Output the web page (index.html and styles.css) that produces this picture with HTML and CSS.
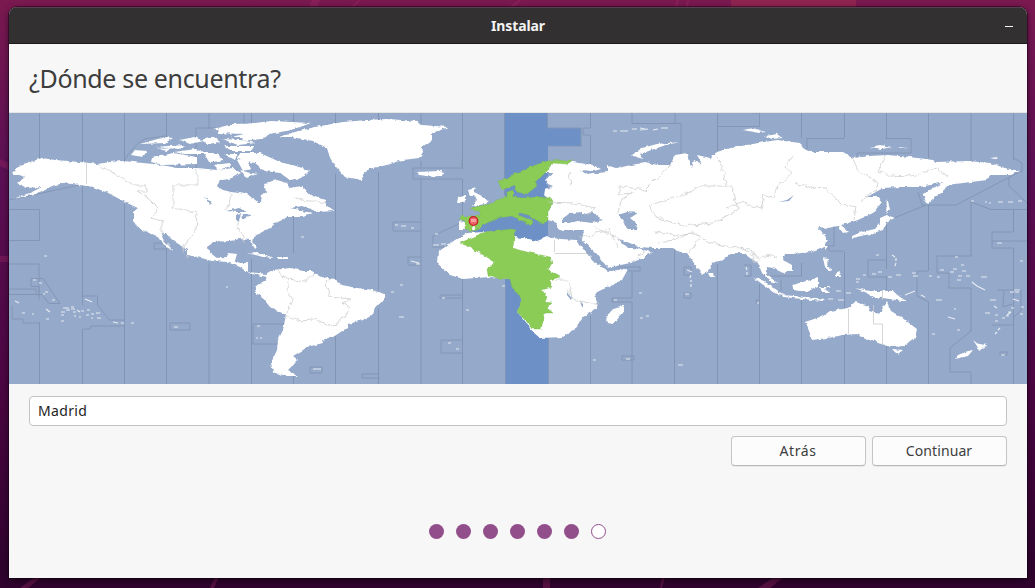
FILE: index.html
```html
<!DOCTYPE html>
<html lang="es">
<head>
<meta charset="utf-8">
<title>Instalar</title>
<link rel="stylesheet" href="styles.css">
</head>
<body>
<svg class="wallpaper" viewBox="0 0 1035 588" aria-hidden="true">
  <path class="streak" d="M312 0h8l-3 8h-9zM358 0h3l-8 8h-3zM518 0h3l-8 8h-5zM676 0h2v8h-3zM687 0h2l-1 8h-3zM0 159l9 4v7l-9-4zM0 256h9v6H0zM543 577h7v11h-7zM662 577h3l-3 11h-2zM774 577h10l-14 11h-12zM35 577h7l-14 11h-8zM215 577h4l-5 11h-4z"/>
  <path class="streak warm" d="M731 0h125v8H731z"/>
</svg>
<main class="window">
  <header class="titlebar"><span class="caption">Instalar</span><button class="minimize" aria-label="Minimizar"></button></header>
  <section class="heading"><h1>¿Dónde se encuentra?</h1></section>
  <svg class="map" viewBox="9 113 1018 271" role="img" aria-label="Mapa de zonas horarias">
    <defs><filter id="coast" x="-5%" y="-5%" width="110%" height="110%"><feTurbulence type="fractalNoise" baseFrequency=".22" numOctaves="2" seed="4" result="n"/><feDisplacementMap in="SourceGraphic" in2="n" scale="3.5" xChannelSelector="R" yChannelSelector="G"/></filter>
    <filter id="border" x="-5%" y="-5%" width="110%" height="110%"><feTurbulence type="fractalNoise" baseFrequency=".16" numOctaves="2" seed="8" result="n"/><feDisplacementMap in="SourceGraphic" in2="n" scale="6" xChannelSelector="R" yChannelSelector="G"/></filter></defs>
    <path class="sea" d="M9 113h1018v271H9z"/>
    <path class="zone" d="M505 113h43v15h33v18h-33v238h-43zM545 214v28H463l20-20 20-9z"/>
    <path class="meridian" d="M39.500 113v46M39.500 322v62M82.500 113v50M82.500 184v112M82.500 329v55M124.500 113v48M124.500 200v184M166.500 113v24M166.500 248v136M209 113v16M209 263v121M251.500 113v20M251.500 259v125M293.500 113v12M293.500 216v37M293.500 374v10M335.500 113v10M335.500 174v105M335.500 336v48M378.500 113v7M378.500 172v118M378.500 308v76M421 113v10M421 161v7M421 179v43M421 231v153M462.500 113v56M462.500 179v43M462.500 279v105M504.500 113v82M505.500 284v100M547.500 113v15M548.500 338v46M590.500 113v15M590.500 135v30M590.500 316v68M632 113v10M632 272v26M632 301v83M675 113v10M674.500 249v135M717.500 113v38M717.500 264v120M759.500 113v13M759.500 284v100M801.500 113v25M801.500 263v13M801.500 300v84M844.500 113v25M844.500 252v132M886.500 113v25M886.500 222v47M886.500 276v14M886.500 346v38M928.500 113v45M928.500 204v67M928.500 302v82M971 113v48M971 201v55M971 288v43M971 373v11M1013.500 113v47M1013.500 210v22M1013.500 248v136"/>
    <path class="edge" d="M9 200l75-16M9 209.500h30.500v31H9M9 264h30v32M9 289h27v5M9 294.500h33l7 9h11l-17-25H31v8h8v13M12 305v14h11v4h16M82.500 329h8v-3h34M82.500 305V296h15v9l12 15h15v6M124 161q8-14 20-22l22-3M196 168v-40h48v-15M154 243h12v6h-12zM170 323h20v7h-20zM284 324h-31v20h30M310 367h12v6h-12zM378 374h-16v4h18M421 257h-13v8h13M462 298h-22v-3h22M462 340h-21v13h21M393 222h28v9h-28zM462 179h-49v-11h49v-9M462 222l-29 14v11h12M548 128h33v18h-33M590 135h-7v-7h7M632 123.500h49v30l-12 10M717 126.500h42.500v-13M752 113h7M807 138.500h37M807 138v11l-10 4M886 138.500h25V153h-54v5M918 192l4 13h34l65-34M1022 173v-10l-8-5M1009 178v8l18 17M971 202l20 7.500h36M894 218l32-13M1013 232h-21v16h21M992 241h35M971 256h-34v17h12v15h22M928 271h-11v25l12 6M886 260h-18v17h18M834 222v24h-8l4 5h14M764 276h37M781 280v11M971 331l-21 17v24h21M992 325h22M1004 290l-1 17 9-3M997 290h24v20l-8 8M1000 352h7v3h-7zM618 267h22v4h-12M632 298h-20v4h20M622 356h12v4h-12zM684 267h7v8h-7zM684 293h7v5h-7zM744 265h7v11h-7M759 300h-3v4"/>
    <g class="land" filter="url(#coast)">
      <path d="M12 173L20 165 30 162 42 158 55 160 80 162 98 164 110 162 123 161 133 162 153 164 167 166 177 168 197 168 217 170 233 168 241 173 230 179 221 180 217 186 219 189 231 192 247 194 258 202 261 202 262 194 266 192 264 183 277 180 287 183 290 188 302 186 307 191 313 196 325 200 326 205 335 211 318 212 302 206 290 208 300 210 312 213 300 217 287 217 277 222 270 228 262 232 253 238 252 241 257 247 255 249 250 240 240 239 230 241 213 242 208 247 209 252 217 258 227 257 229 253 237 254 235 261 240 263 248 263 248 272 258 273 267 274 267 277 253 274 247 272 240 267 227 262 213 261 197 257 188 255 187 250 177 243 170 238 166 233 161 233 163 240 174 251 168 248 160 240 157 236 148 233 137 227 133 220 133 212 138 208 127 203 108 193 93 187 73 184 60 183 50 187 40 193 13 199 32 192 42 187 27 188 17 183 25 177Z"/>
      <path d="M267 273L273 270 290 268 303 271 312 271 322 277 335 279 342 285 357 288 373 290 385 294 385 300 375 307 373 315 363 320 348 324 347 328 333 337 322 340 323 343 307 347 303 350 293 356 298 360 292 366 288 370 298 376 283 376 273 372 271 363 277 350 278 340 283 330 286 315 270 307 262 297 255 292 257 285 266 280Z"/>
      <path d="M279 137l16-5 20-5 28-5 24-2 20-1 30 2 5 4 27 2-17 6v7l-10 7 1 5-4 6-16 2-16 5-19 4-7 11-16-3-8-9-7-10-3-10-14-7-21-4zM417 172l23-1 5 3-12 3-13-2zM468 190l8-2-2 4 8 4 6 5-2 3-14 2 5-6-2-4-5 0zM458 198l8-3 0 6-9 2z"/>
      <path d="M219 129L245 124 272 121 311 123 300 127 286 131 270 134 261 139 242 141 243 137 230 137 245 134 218 133ZM213 129l20-5 30-1-6 8-22 3zM240 153l20 0 20 9 30 8-8 8-12 2-10-7-15-2-10-8-18-4zM152 158l21-5 24 4 0 7-34 1-12-3zM131 155l4-5 12 1-4 6zM140 144l25-7 8 1-8 5zM155 147l30-2-6 4zM180 140l14-3 10 4-14 3zM201 140l13-3 6 5-12 2zM204 153l13 0 7 8-15 1zM224 146l30 0-2 5-20 0zM224 154l14 0-3 6zM237 160l10 0 4 9-8 2zM213 165l17-2 1 3-13 4zM240 170l10 3 8 1-13 3zM174 152l22-3 10 5-22 0zM222 139l18 1 16 3-18 2zM158 149l14-1-5 3z"/>
      <path d="M545 173L552 163 567 163 573 162 593 165 601 169 594 171 580 170 588 175 597 173 608 172 608 166 617 168 632 165 645 162 657 165 670 165 675 155 687 153 689 162 692 168 694 160 702 164 697 155 710 158 717 152 730 148 753 144 777 140 800 143 803 148 810 152 843 152 853 158 870 156 887 155 910 157 933 160 936 162 970 161 990 163 1005 168 1020 171 1010 175 990 175 987 180 963 183 947 185 943 192 935 197 927 204 923 195 933 188 945 182 920 187 900 187 883 188 867 197 878 197 882 202 873 213 858 220 841 225 849 232 843 233 838 226 828 228 818 227 822 232 828 240 823 247 810 252 793 254 785 254 783 260 792 265 792 270 783 273 773 268 767 267 765 272 772 278 777 283 772 283 762 273 758 263 750 258 743 253 732 253 723 260 712 263 708 272 703 274 697 268 692 260 687 253 680 253 673 248 652 248 640 247 627 242 620 239 628 248 638 248 652 252 644 258 630 263 607 268 597 254 583 241 582 238 585 232 583 230 563 230 556 227 557 223 548 220 548 212 553 203 544 195 545 190 553 186 548 184 545 180 553 173ZM459 221l6 1 1 7-7 0z"/>
      <path d="M467 233L485 232 515 230 513 237 523 238 537 241 547 237 560 239 577 240 580 245 588 255 596 263 604 268 608 271 628 269 622 280 610 286 595 293 598 308 583 317 577 327 563 337 540 338 533 332 517 312 522 300 510 279 490 277 463 279 450 275 437 263 438 252 455 240ZM625 305l-2 8-10 11-5-1-1-6 4-7z"/>
      <path d="M805 322l18-6 7-5 18-3 7-6 15 4-1 5 10 3 8-12 4 9 10 6 16 12-2 9-10 8-15 1-12-4-6-4-5 1-10-6-14 1-16 3-15 2-2-7zM893 349l10 1-5 4zM855 288l15 3 23 0 7 6 8 5-18-3-17-2-8-5zM792 285l18-5 8-3 0 10-11 5-13-2zM753 277l11 4 20 14-10-2zM782 295l25 2 18 2-3 2-39-4zM820 287h10l-5 2 5 4-8 0zM823 258l5 1-1 7 6 4-4 1-4-4zM835 274l5-2 1 5-5 0zM825 250l3-4-3 0zM973 340l5 4 9 1-8 6-2-5zM973 350l-5 6-13 3 3-4 10-4z"/>
      <path d="M852 236l10-4 13-3 5-6 0-5 7-3 8 3-9 4-3 8-13 4-18 4zM887 199l3 9-4 6zM632 155l10-7 15-4 21-2-15 4-23 8 3 5-10-3zM743 130l10-2 12 4-6 1zM765 136l12-2 5 4-10 1zM870 147l10-2 12 2-10 2zM896 147l13 1-10 0zM990 158l8-1-3 2zM708 273l5 0 1 4-4 0zM247 253l10-1 17 6-10-1zM278 257h10v2h-10z"/>
    </g>
    <g class="region" filter="url(#coast)">
      <path d="M498 181l9-2 6-4 17-8 17-6 26-1-6 4-15-1-4 7-8 8-5 4 2 4-10 8-10-2-2-7-13 5zM507 192l6-2 0 7 10 1 17-1 10 1 3 5-5 9v8l-5 4-6-4-11-5-5-2-3 2 15 6-1 4-12-5-8-4-15 2-7 4-7 3-3 3-8 3-7-2 0-8-6-2 3-3 18 0 0-4-10-4 20-4 7-4 10-3z"/>
      <path d="M460 243L485 232 512 229 515 230 513 248 522 251 550 257 552 263 548 270 560 277 550 280 552 287 542 290 547 297 545 302 552 303 547 308 553 313 545 313 541 329 532 329 527 322 517 312 522 300 512 287 510 279 498 278 488 275 487 269 495 262 470 247Z"/>
    </g>
    <g class="inland" filter="url(#coast)"><path d="M562 219l8-6 12-1 0 3 10-3 11 8-11 3-14-2-16 3zM618 215l9-3 11 1-8 5 7 6-1 5-9 0-3-7zM227 211l12-3 9 4-12 0zM236 214l5-1-2 9-3-1zM243 214l8 1-9 5zM204 198l8 4-1 3zM300 207l12 2-8 4zM580 240L584 242 591 249 598 256 608 268 603 268 595 262 588 254ZM619 239L628 244 639 247 638 249 628 247 621 243Z"/></g>
    <path class="lake" d="M778 202l9-2 7-5-5 6zM567 292l2 3 3 3-1 2-4-5zM580 301l3 3v3h-1zM567 213l4 1M650 216h4"/>
    <g filter="url(#border)"><path class="borders" d="M97 164l18 10 18 11h13v6h-8l13 10 8 8-8 9 11 3v15M197 169v16h-24v23l24 4-1 18-8 10-5 10 5 8M231 193l-2 12-3 5M238 222l1 10 5 4v7M278 269l3 7 8 3-1 12 5 8-7 16 10 5 20-1 12 7 10-2 12-15-8-6 10-4-23-2-3-15 6-5M289 279l15 3 10-7M294 196l12 6 20 0M569 172l2 14M548 202l25 1 22 5-9 8M554 280l12 0 4 7 2 12 17 4h10M568 291l6 9M594 226l16 8 10 6M670 166l-15 14-10 10-26-4 0 8 15-1-13 7-3 13M657 217l-8-12 35-10 16-9 32 0 6 24-25 13-30 3-18-6zM717 157l8 16 1 14M793 155l-8 12 6 8-13 11-5 12-9-3-3 14-20-7-15 6M794 183l14 4 18 1 15 16 15 3-2 12M853 159l6 13 14 7 6 8-14 10-4 4M886 155l-8 17 8 3 27 1 24-8 10 9M655 232l20 4 18-4 16 10 21 5 20 2 10 12M657 242l18-2 15-8 10 6-10 14M580 237l12-2 17-6 3 7 6 12M645 252l-12 8M740 248l13 6 2 9 10-8 12 2"/></g>
    <path class="borders" d="M86.500 162v22M848.500 309v25M873.500 305v19h9v21M882.500 290v10M554.500 240v12M554.500 253.500h33"/>
    <path class="isles" d="M44 256h3M33 280h3M39 283h3M45 292h3M43 294h2M52 300h3M15 301l4 2M22 313h3M32 314h2M46 309l4 3M61 312h4M61 315h3M63 308h6M66 310h4M71 309h4M73 312h3M77 310l3 2M81 311h3M71 307h3M87 310h3M86 315h3M91 314h3M96 313h4M91 318h2M97 318h4M74 316h2M79 317h2M61 321h3M46 319h3M85 299l7 3M113 322l5 1M121 323h3M131 323h3M174 327h4M226 287h2M257 326h3M256 338h2M260 338h2M313 369h8M301 237h3M395 225h3M401 226h5M411 228h3M411 261l8 2M416 264h4M400 285h3M391 292h3M399 317h5M442 298h3M466 310h3M448 343h3M456 349h3M433 245h6M441 244h5M435 234h3M502 286h3M593 360h3M614 300h3M626 359h4M639 293h3M640 318h3M646 316h3M687 270l5 2M691 275l-1 3M691 280v2M691 284v3M685 294h4M746 267l1 3M747 272v3M678 365h5M757 303h2M613 131h4M620 131h8M632 129h5M640 130l8-1M640 128l5 1M653 130l5-1M661 128h7M971 201h3M985 202h2M989 203h2M998 202h5M1008 202h5M1018 201h4M997 243h5M1020 261h3M876 255h3M892 255l3 2M896 258v3M896 263l-1 3M872 274h4M878 272h4M863 275h3M856 279h4M856 282h3M888 277h4M896 275h5M912 273h4M913 276h5M929 276h3M937 277h3M940 270h4M955 257h3M961 265h3M950 272h4M953 269h4M958 276h4M962 271h4M957 280h4M966 276h4M981 277h6M972 282l5 4 8 4M905 295l10-4M921 295l4 2M936 300h6M948 317l7 2M954 309h2M957 330h3M932 334h3M990 300h6M985 313h5M994 306l3 2M995 315h3M995 321h3M995 334l2-2M998 330l2-2M1002 318h3M1006 316h3M1008 312h3M1007 315l4-3M1011 308h3M1013 299l6 2M1010 292h4M1015 292h4M1014 290h6M1021 307h3M1020 314h3M1001 355h4M828 299h5M838 300h6M836 291h5M846 293h5"/>
    <g class="pin"><ellipse cx="473.500" cy="228.500" rx="1.500" ry="1.800"/><path d="M473 225h1.500v4H473z"/><circle cx="473.500" cy="221" r="4.300"/><path class="shine" d="M471 219h5v3h-5z"/></g>
  </svg>
  <section class="form">
    <input class="city" type="text" value="Madrid" aria-label="Ciudad">
    <div class="actions"><button class="back">Atrás</button><button>Continuar</button></div>
  </section>
  <footer class="steps"><i></i><i></i><i></i><i></i><i></i><i></i><i class="pending"></i></footer>
</main>
</body>
</html>
```
FILE: styles.css
```css
* { box-sizing: border-box; }
body {
  margin: 0;
  width: 1035px;
  height: 588px;
  padding: 7px 8px 10px 9px;
  overflow: hidden;
  background: linear-gradient(180deg, #7b1951 0, #5d1055 28%, #4d0643 65%, #30032f 96%);
  font-family: "Noto Sans", sans-serif;
  color: #3d3d3d;
}
.wallpaper { position: absolute; inset: 0; width: 1035px; height: 588px; }
.streak { fill: #a02a68; opacity: .35; }
.warm { fill: #a5304f; opacity: .5; }
.window {
  position: relative;
  display: flex;
  flex-direction: column;
  height: 571px;
  overflow: hidden;
  background: #f7f7f7;
  border-radius: 8px 8px 0 0;
  box-shadow: 0 0 0 1px rgba(20,0,20,.45), 0 2px 7px rgba(0,0,0,.55);
}
.titlebar {
  display: grid;
  grid-template-columns: 36px 1fr 36px;
  align-items: center;
  flex: 0 0 37px;
  background: #323030;
  border-top: 1px solid #55404c;
  border-bottom: 1px solid #1c1a1a;
}
.caption { grid-column: 2; text-align: center; color: #f4f4f4; font-size: 14px; font-weight: 700; letter-spacing: -.1px; }
.minimize { display: grid; place-items: center; height: 30px; padding: 2px 0 0; border: 0; background: none; }
.minimize::after { content: ""; width: 8px; height: 1px; background: #f7f7f7; }
.heading { display: flex; align-items: center; flex: 0 0 69px; padding: 0 20px 1px; border-bottom: 1px solid #e5e5e3; }
h1 { margin: 0; font-size: 25px; font-weight: 400; letter-spacing: -.34px; line-height: 34px; }
.map { flex: 0 0 271px; width: 1018px; display: block; }
.sea { fill: #95a9ca; }
.zone { fill: #6d91c7; }
.meridian, .edge, .borders { fill: none; }
.meridian { stroke: #8194b4; stroke-width: 1; }
.edge { stroke: #8396b5; stroke-width: 1; }
.land { fill: #fff; }
.region { fill: #8acc54; stroke: #79b950; stroke-width: .4; }
.inland, .lake { fill: #95a9ca; }
.borders { stroke: #cbcdce; stroke-width: .8; }
.isles { fill: none; stroke: #e6ebf2; stroke-width: 1.200; }
.pin { fill: #fff; }
.pin circle { fill: #ef6468; stroke: #c51e2b; stroke-width: 1.200; }
.pin .shine { fill: #f7a0a0; }
.form { display: flex; flex-direction: column; gap: 10px; padding: 12px 20px 0; }
.city {
  height: 30px;
  padding: 0 8px 2px;
  border: 1px solid #c5c3c1;
  border-radius: 4px;
  background: #fff;
  color: #1d1d1d;
  font: 14px "Noto Sans", sans-serif;
  letter-spacing: .35px;
}
.actions { display: flex; justify-content: flex-end; gap: 6px; }
.actions button {
  width: 135px;
  height: 30px;
  padding: 0 1px 2px 0;
  border: 1px solid #c7c5c3;
  border-bottom-color: #b9b7b5;
  border-radius: 4px;
  background: #fcfcfc;
  box-shadow: 0 1px 1px rgba(0,0,0,.06);
  color: #3d3d3d;
  font: 14px "Noto Sans", sans-serif;
  letter-spacing: .1px;
}
.actions .back { letter-spacing: .6px; }
.steps { display: flex; justify-content: center; gap: 12px; padding: 58px 2px 0 0; }
.steps i { width: 15px; height: 15px; border-radius: 50%; background: #924d8b; }
.steps .pending { border: 1px solid #924d8b; background: #fff; }
```
